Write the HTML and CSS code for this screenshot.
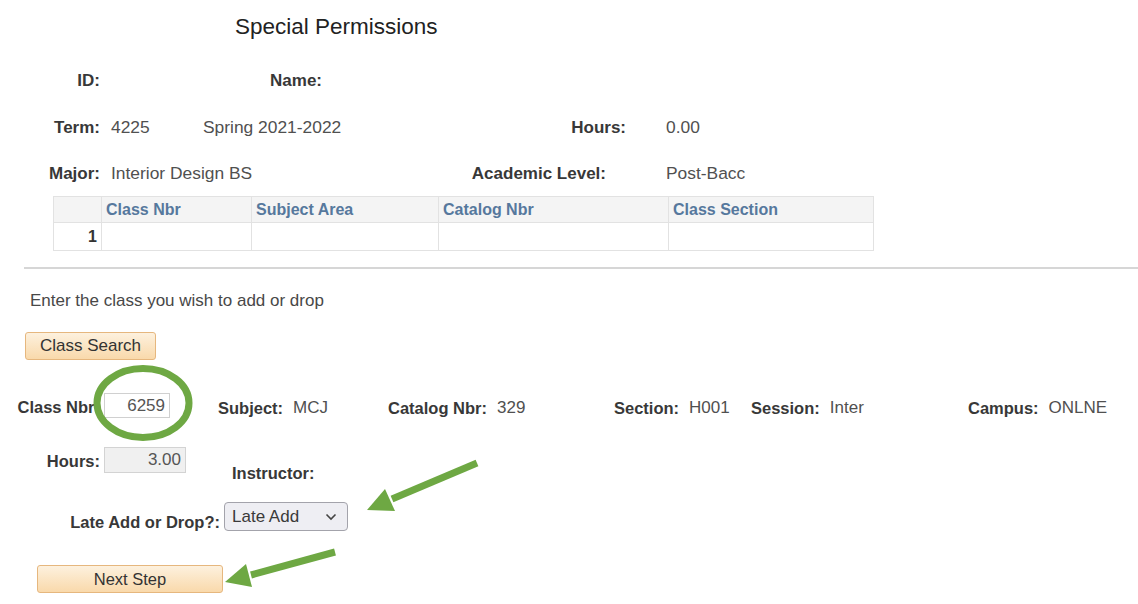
FILE: index.html
```html
<!DOCTYPE html>
<html lang="en">
<head>
  <meta charset="UTF-8">
  <title>Special Permissions</title>
  <link rel="stylesheet" href="styles.css">
</head>
<body>
  <div class="page">
    <h1 class="page-title">Special Permissions</h1>

    <div class="info-row">
      <span class="lbl lbl-main">ID:</span>
      <span class="lbl lbl-name">Name:</span>
    </div>
    <div class="info-row">
      <span class="lbl lbl-main">Term:</span>
      <span class="val val-term">4225</span>
      <span class="val val-descr">Spring 2021-2022</span>
      <span class="lbl lbl-hours">Hours:</span>
      <span class="val val-hours">0.00</span>
    </div>
    <div class="info-row">
      <span class="lbl lbl-main">Major:</span>
      <span class="val val-major">Interior Design BS</span>
      <span class="lbl lbl-level">Academic Level:</span>
      <span class="val val-level">Post-Bacc</span>
    </div>

    <table class="class-grid">
      <colgroup>
        <col class="c-row"><col class="c-nbr"><col class="c-subj"><col class="c-cat"><col class="c-sect">
      </colgroup>
      <thead>
        <tr><th></th><th>Class Nbr</th><th>Subject Area</th><th>Catalog Nbr</th><th>Class Section</th></tr>
      </thead>
      <tbody>
        <tr><td class="row-num">1</td><td></td><td></td><td></td><td></td></tr>
      </tbody>
    </table>

    <hr class="divider">

    <p class="instruction">Enter the class you wish to add or drop</p>

    <button class="ps-btn btn-search">Class Search</button>

    <div class="entry">
      <div class="entry-row">
        <label class="lbl lbl-main">Class Nbr:</label>
        <input class="num-input nbr-input" value="6259">
        <div class="field f-subject"><span class="lbl">Subject:</span><span class="val">MCJ</span></div>
        <div class="field f-catalog"><span class="lbl">Catalog Nbr:</span><span class="val">329</span></div>
        <div class="field f-section"><span class="lbl">Section:</span><span class="val">H001</span></div>
        <div class="field f-session"><span class="lbl">Session:</span><span class="val">Inter</span></div>
        <div class="field"><span class="lbl">Campus:</span><span class="val">ONLNE</span></div>
      </div>

      <div class="hours-row">
        <label class="lbl lbl-main lbl-hrs">Hours:</label>
        <input class="num-input hrs-input" value="3.00" readonly>
        <div class="field f-instructor"><span class="lbl">Instructor:</span></div>
      </div>

      <div class="late-row">
        <label class="lbl lbl-late">Late Add or Drop?:</label>
        <div class="select-wrap">
          <select class="late-select">
            <option>Late Add</option>
            <option>Late Drop</option>
          </select>
          <svg class="chevron" width="12" height="8" viewBox="0 0 12 8">
            <path d="M1.5 1.5 L6 6 L10.5 1.5" fill="none" stroke="#444" stroke-width="1.6"/>
          </svg>
        </div>
      </div>
    </div>

    <button class="ps-btn btn-next">Next Step</button>
  </div>

  <!-- annotation marks drawn over the form -->
  <svg class="marks" width="1138" height="604" viewBox="0 0 1138 604">
    <ellipse cx="143" cy="403" rx="46" ry="34.5" fill="none" stroke="#6ea843" stroke-width="7"/>
    <line x1="477" y1="463" x2="392" y2="499" stroke="#6ea843" stroke-width="7"/>
    <polygon points="367,510 385,489 395,511" fill="#6ea843"/>
    <line x1="335" y1="552" x2="251" y2="575" stroke="#6ea843" stroke-width="7"/>
    <polygon points="225,582 246,564 252,587" fill="#6ea843"/>
  </svg>
</body>
</html>
```

FILE: styles.css
```css
body {
  margin: 0;
  background: #fff;
  color: #4d4d4d;
  font-family: "Liberation Sans", Arial, sans-serif;
  font-size: 17px;
  position: relative;
  width: 1138px;
  height: 604px;
  overflow: hidden;
}
.page-title {
  margin: 0;
  padding: 14px 0 0 235px;
  font-size: 22.5px;
  line-height: 26px;
  font-weight: normal;
  color: #222;
}
.lbl {
  font-weight: bold;
  color: #383838;
  white-space: nowrap;
}
.val {
  color: #505050;
  white-space: nowrap;
}

/* header info */
.info-row {
  display: flex;
  align-items: baseline;
  height: 46px;
  line-height: 46px;
}
.info-row .val {
  font-size: 17.4px;
}
.info-row:first-of-type {
  margin-top: 18px;
}
.lbl-main {
  width: 100px;
  text-align: right;
  flex: none;
}
.lbl-name {
  width: 222px;
  text-align: right;
}
.val-term {
  margin-left: 11px;
  width: 92px;
}
.val-descr {
  width: 140px;
}
.lbl-hours {
  width: 283px;
  text-align: right;
}
.val-hours {
  margin-left: 40px;
}
.val-major {
  margin-left: 11px;
  width: 232px;
}
.lbl-level {
  width: 263px;
  text-align: right;
}
.val-level {
  margin-left: 60px;
}

/* class grid */
.class-grid {
  margin-left: 53px;
  width: 821px;
  border-collapse: collapse;
  table-layout: fixed;
  font-size: 16px;
}
.c-row { width: 48px; }
.c-nbr { width: 150px; }
.c-subj { width: 187px; }
.c-cat { width: 230px; }
.c-sect { width: 205px; }
.class-grid th,
.class-grid td {
  border: 1px solid #e2e2e2;
  padding: 0 4px;
}
.class-grid th {
  height: 25px;
  background: #f4f4f4;
  color: #56789d;
  text-align: left;
  font-weight: bold;
}
.class-grid td {
  height: 27px;
}
.row-num {
  text-align: right;
  font-weight: bold;
  color: #333;
  padding-right: 5px;
}

.divider {
  margin: 16px 0 0 24px;
  border: none;
  height: 2px;
  background: #d6d6d6;
}
.instruction {
  margin: 22px 0 0 30px;
  line-height: 20px;
  color: #484848;
}

/* buttons */
.ps-btn {
  display: block;
  height: 28px;
  padding: 0;
  border: 1px solid #e6b77e;
  border-radius: 3px;
  background: linear-gradient(#fdf1de, #f9d9ab);
  color: #333;
  font-family: inherit;
  font-size: 17px;
}
.btn-search {
  margin: 21px 0 0 25px;
  width: 131px;
}
.btn-next {
  margin: 34px 0 0 37px;
  width: 186px;
  font-size: 16.5px;
}

/* class entry */
.entry .lbl {
  font-size: 16.5px;
}
.entry-row {
  display: flex;
  align-items: flex-end;
  margin-top: 33px;
  height: 25px;
  line-height: 20px;
}
.entry-row .lbl-main {
  align-self: center;
  line-height: 25px;
  padding-top: 4px;
}
.num-input {
  box-sizing: border-box;
  margin: 0 0 0 4px;
  border: 1px solid #d0d0d0;
  padding: 0 4px;
  text-align: right;
  font-family: inherit;
  font-size: 17px;
  color: #555;
  background: #fff;
  flex: none;
}
.nbr-input {
  width: 66px;
  height: 25px;
  align-self: flex-start;
}
.field {
  display: flex;
  gap: 10px;
  flex: none;
}
.f-subject { margin-left: 48px; width: 170px; }
.f-catalog { width: 226px; }
.f-section { width: 137px; }
.f-session { width: 217px; }

.hours-row {
  display: flex;
  margin-top: 29px;
  height: 36px;
}
.lbl-hrs {
  line-height: 29px;
}
.hrs-input {
  width: 82px;
  height: 26px;
  background: #f0f0f0;
  border-color: #d3d3d3;
}
.f-instructor {
  margin-left: 46px;
  align-self: flex-end;
  line-height: 20px;
}

.late-row {
  display: flex;
  margin-top: 19px;
  height: 29px;
}
.lbl-late {
  width: 220px;
  text-align: right;
  align-self: flex-end;
  line-height: 20px;
  margin-bottom: -1px;
}
.select-wrap {
  position: relative;
  margin-left: 4px;
}
.late-select {
  appearance: none;
  box-sizing: border-box;
  width: 124px;
  height: 29px;
  padding: 0 0 0 7px;
  border: 1px solid #a3a3ab;
  border-radius: 4px;
  background: #eeeef3;
  color: #3a3a3a;
  font-family: inherit;
  font-size: 17px;
}
.chevron {
  position: absolute;
  right: 11px;
  top: 11px;
  pointer-events: none;
}

.marks {
  position: absolute;
  top: 0;
  left: 0;
  pointer-events: none;
}
```
